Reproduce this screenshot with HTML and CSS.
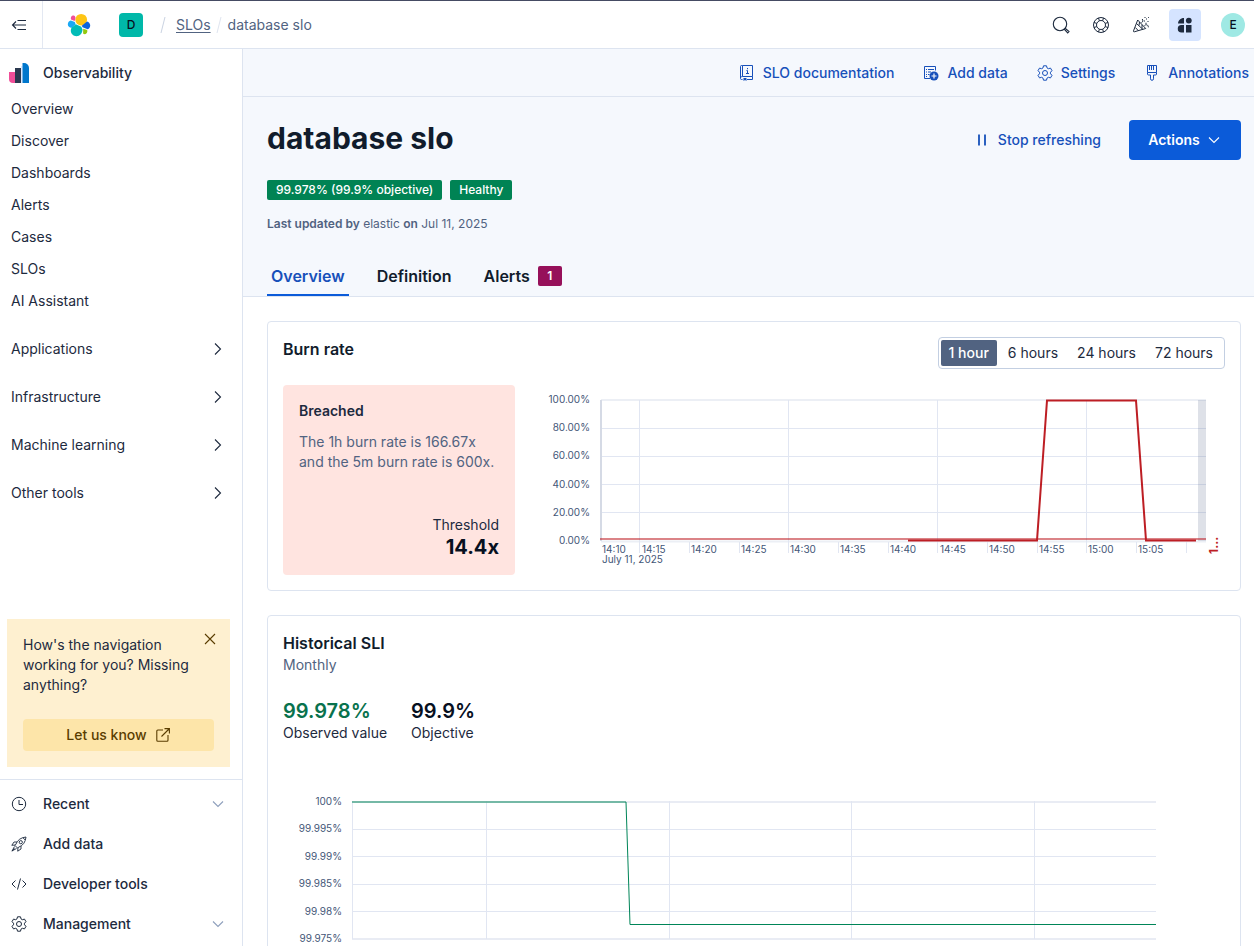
FILE: index.html
```html
<!DOCTYPE html>
<html lang="en">
<head>
<meta charset="utf-8">
<meta name="viewport" content="width=device-width, initial-scale=1">
<title>database slo - SLOs - Elastic</title>
<link rel="stylesheet" href="styles.css">
</head>
<body>
<svg class="defs" width="0" height="0" aria-hidden="true">
  <symbol id="chevron-right" viewBox="0 0 16 16"><path d="M5 2.500l5.500 5.500L5 13.500" fill="none" stroke="currentColor" stroke-width="1.100"/></symbol>
  <symbol id="chevron-down" viewBox="0 0 16 16"><path d="M3 5.500l5 5 5-5" fill="none" stroke="currentColor" stroke-width="1.100"/></symbol>
  <symbol id="gear" viewBox="0 0 16 16"><g fill="none" stroke="currentColor" stroke-linejoin="round"><path d="M6.500.8h3l.5 2.100 1.400.8 2.100-.6 1.500 2.600-1.500 1.500v1.600l1.500 1.500-1.500 2.600-2.100-.6-1.400.8-.5 2.100h-3L6 13.100l-1.400-.8-2.100.6L1 10.300l1.500-1.500V7.200L1 5.700l1.500-2.600 2.100.6L6 2.900z"/><circle cx="8" cy="8" r="2.500"/></g></symbol>
</svg>

<header class="topbar">
  <button class="topbar-toggle" aria-label="Toggle navigation">
    <svg width="16" height="16" viewBox="0 0 16 16" fill="none" stroke="currentColor" stroke-width="1.100"><path d="M6.500 3.500H15M1.500 8H15M6.500 12.500H15M5 4.500L1.500 8 5 11.500"/></svg>
  </button>
  <a class="logo" href="#" aria-label="Elastic home">
    <svg width="24" height="24" viewBox="0 0 24 24">
      <ellipse cx="14.200" cy="6.700" rx="5.900" ry="5.800" fill="#fec514"/>
      <path d="M7.300 2.800c1 .6 1.500 2 .9 3.200l-.5 1.900-3.700-1.300c-.6-1.600.2-3.800 1.800-4.100.6 0 1.100.1 1.500.3z" fill="#f04e98"/>
      <path d="M3.800 7.500l4 1.500.8 2.200-3.700 3.500c-2 .3-4.100-1.300-4.100-3.500 0-1.800 1.300-3.300 3-3.700z" fill="#1ba9f5"/>
      <path d="M4.700 14.600L8.800 11.300l5.500 2.500 1.200 2.800c0 3.700-2.500 6.700-6 6.700-3.200 0-5.700-2.600-5.700-5.700 0-1.100.3-2.100.9-3z" fill="#02bcb7"/>
      <path d="M20 8.400c1.900.5 3.200 2.100 3.200 4 0 1.700-1 3.200-2.600 3.900l-5-2-.8-1.500z" fill="#0b64dd"/>
      <path d="M16.200 15.700l4 1.400c.6 1.900-.6 4.100-2.300 4.100-.7 0-1.300-.2-1.800-.6z" fill="#93c90e"/>
    </svg>
  </a>
  <button class="space" aria-label="Default space">D</button>
  <nav class="crumbs" aria-label="Breadcrumbs">
    <svg class="slash" width="8" height="18" viewBox="0 0 8 18"><path d="M6 1L2 17" stroke="#cad3e2"/></svg>
    <a href="#">SLOs</a>
    <svg class="slash" width="8" height="18" viewBox="0 0 8 18"><path d="M6 1L2 17" stroke="#dfe5f0"/></svg>
    <span>database slo</span>
  </nav>
  <div class="tools">
    <button class="tool" aria-label="Search"><svg width="18" height="18" viewBox="0 0 18 18" fill="none" stroke="currentColor" stroke-width="1.100"><circle cx="8" cy="8" r="6.700"/><path d="M12.500 13.500l1-1 3.500 3-1.300 1.400z"/></svg></button>
    <button class="tool" aria-label="Help"><svg width="18" height="18" viewBox="0 0 18 18" fill="none" stroke="currentColor"><circle cx="9" cy="9" r="7.500"/><circle cx="9" cy="9" r="4.500"/><path d="M6.500 2l.9 2.800M11.500 2l-.9 2.800M6.500 16l.9-2.800M11.500 16l-.9-2.800M2 6.500l2.800.9M2 11.500l2.800-.9M16 6.500l-2.800.9M16 11.500l-2.800-.9"/></svg></button>
    <button class="tool" aria-label="What's new"><svg width="18" height="18" viewBox="0 0 18 18" fill="none" stroke="currentColor"><path d="M5.700 4l8 8.500L2.300 15.800c-.6.2-1-.3-.8-.9zM4.500 7.500l6.500 6M3.300 11.500l3.200 3.300M7.500 6l-.5 3.500M10 8.800v3.700M9.500 6.500c1.500-.5 1.800-2 .7-3.500M12.500 9.500c1.200-1.200 3.700-1.200 3.900 1.800"/><path d="M12 5h1M14 3h1M12.500 1.500h1M15.500 5.500h1M13.500 7.300h1M16 1.500h.8" stroke-width="1.200"/></svg></button>
    <button class="tool tool-active" aria-label="Assistant"><svg width="16" height="16" viewBox="0 0 16 16" fill="currentColor"><path d="M7 1v5.500H1C1 3.500 3.500 1 7 1z"/><circle cx="11.800" cy="3.600" r="2.900"/><path d="M7 8v7.500H4.500a3.700 3.700 0 0 1 0-7.500zM9 8h5.500v7.500H9z"/></svg></button>
    <button class="tool" aria-label="Account menu"><span class="avatar">E</span></button>
  </div>
</header>

<div class="app">
  <aside class="side">
    <nav class="side-main" aria-label="Observability">
      <a class="side-title" href="#">
        <svg width="20" height="20" viewBox="0 0 20 20"><path d="M0 9h6v11H4a4 4 0 0 1-4-4z" fill="#f04e98"/><path d="M6 5h6v15H6z" fill="#2b394f"/><path d="M12 3h1.500v17H12z" fill="#d9e8ff"/><path d="M13.500 0H15a5 5 0 0 1 5 5v15h-6.500z" fill="#0077cc"/></svg>
        <span>Observability</span>
      </a>
      <a class="side-link" href="#">Overview</a>
      <a class="side-link" href="#">Discover</a>
      <a class="side-link" href="#">Dashboards</a>
      <a class="side-link" href="#">Alerts</a>
      <a class="side-link" href="#">Cases</a>
      <a class="side-link" href="#">SLOs</a>
      <a class="side-link" href="#">AI Assistant</a>
      <button class="side-link side-group">Applications<svg width="16" height="16"><use href="#chevron-right"/></svg></button>
      <button class="side-link side-group">Infrastructure<svg width="16" height="16"><use href="#chevron-right"/></svg></button>
      <button class="side-link side-group">Machine learning<svg width="16" height="16"><use href="#chevron-right"/></svg></button>
      <button class="side-link side-group">Other tools<svg width="16" height="16"><use href="#chevron-right"/></svg></button>
    </nav>
    <section class="callout">
      <p>How's the navigation working for you? Missing anything?</p>
      <button class="callout-close" aria-label="Dismiss"><svg width="12" height="12" viewBox="0 0 12 12" stroke="currentColor" stroke-width="1.100"><path d="M1 1l10 10M11 1L1 11"/></svg></button>
      <a class="callout-action" href="#">Let us know
        <svg width="16" height="16" viewBox="0 0 16 16" fill="none" stroke="currentColor" stroke-width="1.100"><path d="M8 3H2.800a1 1 0 0 0-1 1v9.200a1 1 0 0 0 1 1H12a1 1 0 0 0 1-1V8M6.500 9.500l7.500-7.500M9.500 1.600h4.900v4.900"/></svg>
      </a>
    </section>
    <nav class="side-foot" aria-label="Tools">
      <button class="foot-link"><svg width="16" height="16" viewBox="0 0 16 16" fill="none" stroke="currentColor"><circle cx="8" cy="8" r="6.700"/><path d="M8 4v4.500h4"/></svg><span>Recent</span><svg class="foot-arrow" width="16" height="16"><use href="#chevron-down"/></svg></button>
      <a class="foot-link" href="#"><svg width="16" height="16" viewBox="0 0 16 16" fill="none" stroke="currentColor" stroke-width=".9"><path d="M5 8c1.500-4 5-6.500 10-7-.5 5-3 8.500-7 10L6.500 12 4 9.500zM6 6H3L.8 9.300 4.200 9M10 10v3l-3.300 2.200.3-3.400M3.500 10.500L1 15l4.500-2.500M3.500 12.500L.8 15.200M12 1.800L14.200 4"/><circle cx="9.800" cy="6.200" r="1.600"/></svg><span>Add data</span></a>
      <a class="foot-link" href="#"><svg width="16" height="16" viewBox="0 0 16 16" fill="none" stroke="currentColor"><path d="M4.500 4.500L1 8l3.500 3.500M11.500 4.500L15 8l-3.500 3.500M9.500 2.500l-3 11"/></svg><span>Developer tools</span></a>
      <button class="foot-link"><svg width="16" height="16"><use href="#gear"/></svg><span>Management</span><svg class="foot-arrow" width="16" height="16"><use href="#chevron-down"/></svg></button>
    </nav>
  </aside>

  <main class="main">
    <div class="actions-bar">
      <a class="bar-link" href="#"><svg width="16" height="16" viewBox="0 0 16 16" fill="none" stroke="currentColor"><path d="M3.500.5h10v11h-10zM3.500.5h-1a1 1 0 0 0-1 1v12a1 1 0 0 0 1 1h1M3.500 11.500c-1 0-2 .5-2 1.500M8 14.500h5.500v-3"/><path d="M4.500 13h3v3L6 15l-1.500 1z" fill="currentColor" stroke="none"/><path d="M8.500 3v1.200M7.500 5.500h1v3M7 8.500h3"/></svg>SLO documentation</a>
      <a class="bar-link" href="#"><svg width="16" height="16" viewBox="0 0 16 16" fill="none" stroke="currentColor"><path d="M12.500 5.500v-4h-11v12H7M3 4.500h1M5 4.500h6M3 7h1M5 7h3M3 9.500h1M5 9.500h1.500M3 11.500h1"/><circle cx="11" cy="11" r="4.500" fill="currentColor" stroke="none"/><path d="M11 8.500v5M8.500 11h5" stroke="#f5f8fd" stroke-width="1.200"/></svg>Add data</a>
      <a class="bar-link" href="#"><svg width="16" height="16"><use href="#gear"/></svg>Settings</a>
      <a class="bar-link" href="#"><svg width="16" height="16" viewBox="0 0 16 16" fill="none" stroke="currentColor"><path d="M3.500.5h9v7h-9zM3.500 7.500V9a1 1 0 0 0 1 1h2v3.800a1.500 1.500 0 0 0 3 0V10h2a1 1 0 0 0 1-1V7.500M5.500.5v4.500M7.500.5v4.500M9.500.5v4.500"/></svg>Annotations</a>
    </div>

    <section class="page-head">
      <div class="head-row">
        <h1>database slo</h1>
        <div class="head-actions">
          <button class="refresh"><svg width="16" height="16" viewBox="0 0 16 16" stroke="currentColor" stroke-width="1.800"><path d="M5 2.500v11M11 2.500v11"/></svg>Stop refreshing</button>
          <button class="primary">Actions<svg width="16" height="16"><use href="#chevron-down"/></svg></button>
        </div>
      </div>
      <div class="badges"><span class="badge">99.978% (99.9% objective)</span><span class="badge">Healthy</span></div>
      <p class="updated"><b>Last updated by</b> elastic <b>on</b> Jul 11, 2025</p>
      <div class="tabs" role="tablist">
        <button class="tab tab-on" role="tab" aria-selected="true">Overview</button>
        <button class="tab" role="tab" aria-selected="false">Definition</button>
        <button class="tab" role="tab" aria-selected="false">Alerts<span class="count">1</span></button>
      </div>
    </section>

    <div class="panels">
      <section class="panel">
        <div class="panel-head">
          <h2>Burn rate</h2>
          <div class="ranges" role="group" aria-label="Time window">
            <button class="range range-on" aria-pressed="true">1 hour</button>
            <button class="range" aria-pressed="false">6 hours</button>
            <button class="range" aria-pressed="false">24 hours</button>
            <button class="range" aria-pressed="false">72 hours</button>
          </div>
        </div>
        <div class="burn">
          <div class="breach">
            <h3>Breached</h3>
            <p>The 1h burn rate is 166.67x and the 5m burn rate is 600x.</p>
            <div class="threshold"><span>Threshold</span><strong>14.4x</strong></div>
          </div>
          <svg class="chart" viewBox="0 0 686 190" role="img" aria-label="Burn rate over the last hour">
            <g fill="none" stroke="#e1e6f2">
              <path d="M62 15H667M62 156.500H667" stroke="#eceff5" stroke-width="2"/>
              <path d="M62 43.500H667M62 71.500H667M62 99.500H667M62 127.500H667M100.500 15V168M249.500 15V168M398.500 15V168M547.500 15V168"/>
              <path d="M150.500 157V168M200.500 157V168M299.500 157V168M349.500 157V168M448.500 157V168M498.500 157V168M597.500 157V168M647.500 157V168"/>
            </g>
            <path d="M62 15V156" stroke="#d5dae5" stroke-width="2"/>
            <path d="M659 15h8v141h-8z" fill="#5a688c" fill-opacity=".2"/>
            <path d="M61 154H667" stroke="#bd1e24" stroke-opacity=".55" stroke-width="2"/>
            <path d="M369 155.500H498L508 15.500H597L607 155.500H657" fill="none" stroke="#bd1e24" stroke-width="2"/>
            <g class="ticks ticks-y"><text x="51" y="18">100.00%</text><text x="51" y="46">80.00%</text><text x="51" y="74">60.00%</text><text x="51" y="103">40.00%</text><text x="51" y="131">20.00%</text><text x="51" y="159">0.00%</text></g>
            <g class="ticks"><text x="63" y="168">14:10</text><text x="103" y="168">14:15</text><text x="152" y="168">14:20</text><text x="202" y="168">14:25</text><text x="251" y="168">14:30</text><text x="301" y="168">14:35</text><text x="351" y="168">14:40</text><text x="401" y="168">14:45</text><text x="450" y="168">14:50</text><text x="500" y="168">14:55</text><text x="549" y="168">15:00</text><text x="599" y="168">15:05</text><text x="63" y="178">July 11, 2025</text></g>
            <text class="mark" transform="translate(679 169) rotate(-90)">1…</text>
          </svg>
        </div>
      </section>

      <section class="panel">
        <h2>Historical SLI</h2>
        <p class="period">Monthly</p>
        <dl class="stats">
          <div class="stat"><dt>Observed value</dt><dd class="good">99.978%</dd></div>
          <div class="stat"><dt>Objective</dt><dd>99.9%</dd></div>
        </dl>
        <svg class="chart" viewBox="0 0 942 170" role="img" aria-label="Historical SLI, monthly">
          <g fill="none" stroke="#e1e6f2">
            <path d="M69 19H873M69 156H873" stroke="#e9ecf4" stroke-width="2"/>
            <path d="M69 46.500H873M69 73.500H873M69 101.500H873M69 128.500H873M69.500 18V156M203.500 18V156M386.500 18V156M568.500 18V156M751.500 18V156"/>
          </g>
          <path d="M69 19H343L347 141.500H873" fill="none" stroke="#008558" stroke-width="1"/>
          <g class="ticks ticks-y"><text x="59" y="22">100%</text><text x="59" y="49">99.995%</text><text x="59" y="77">99.99%</text><text x="59" y="104">99.985%</text><text x="59" y="132">99.98%</text><text x="59" y="159">99.975%</text></g>
        </svg>
      </section>
    </div>
  </main>
</div>
</body>
</html>
```

FILE: styles.css
```css
* { box-sizing: border-box; }
body {
  margin: 0;
  height: 100vh;
  display: flex;
  flex-direction: column;
  overflow: hidden;
  background: #fff;
  color: #1d2a3e;
  font: 400 14px/20px Inter, "Liberation Sans", sans-serif;
}
h1, h2, h3, p, dl, dd { margin: 0; }
button { border: 0; padding: 0; background: none; color: inherit; font: inherit; cursor: pointer; }
a { color: inherit; text-decoration: none; }
svg { flex: none; }
.defs { position: absolute; }

.topbar {
  flex: none;
  display: flex;
  align-items: center;
  height: 49px;
  border-top: 1px solid #454b63;
  border-bottom: 1px solid #dde4f0;
}
.topbar-toggle {
  display: flex;
  align-items: center;
  align-self: stretch;
  width: 43px;
  padding-left: 11px;
  border-right: 1px solid #e3e8f2;
}
.logo { display: flex; margin-left: 24px; }
.space {
  width: 24px;
  height: 24px;
  margin-left: 28px;
  border-radius: 4px;
  background: #00b8a9;
  color: #07101f;
  font-size: 12px;
  font-weight: 500;
}
.crumbs { display: flex; align-items: center; margin-left: 16px; color: #516381; }
.crumbs a { margin: 0 4px 0 9px; text-decoration: underline; text-underline-offset: 2px; }
.crumbs span { margin-left: 5px; }
.tools { display: flex; gap: 8px; margin-left: auto; padding-right: 5px; }
.tool { display: flex; align-items: center; justify-content: center; width: 32px; height: 32px; border-radius: 4px; }
.tool-active { margin: 0 8px 0 4px; background: #d5e4ff; }
.avatar {
  width: 24px;
  border-radius: 50%;
  background: #9fe9e4;
  color: #07101f;
  font-size: 12px;
  font-weight: 500;
  line-height: 24px;
}

.app { flex: 1; display: flex; min-height: 0; }

.side { flex: none; display: flex; flex-direction: column; width: 243px; border-right: 1px solid #dde4f0; }
.side-main { display: flex; flex-direction: column; }
.side-title { display: flex; align-items: center; gap: 14px; height: 44px; padding: 4px 0 0 9px; font-weight: 500; }
.side-link { display: flex; align-items: center; justify-content: space-between; height: 32px; padding: 0 16px 0 11px; }
.side-group { margin-top: 16px; }
.callout { position: relative; margin: auto 12px 12px 7px; padding: 16px; background: #fef0d0; }
.callout p { padding-right: 24px; }
.callout-close { position: absolute; top: 14px; right: 14px; display: flex; color: #5a3d00; }
.callout-action {
  display: flex;
  align-items: center;
  justify-content: center;
  gap: 8px;
  height: 32px;
  margin-top: 24px;
  border-radius: 4px;
  background: #fde5a9;
  color: #5a3d00;
  font-weight: 500;
}
.side-foot { display: flex; flex-direction: column; padding: 4px 0 2px; border-top: 1px solid #dde4f0; }
.foot-link { display: flex; align-items: center; gap: 16px; height: 40px; padding: 0 16px 0 11px; font-weight: 500; }
.foot-arrow { margin-left: auto; color: #8e9fbc; }

.main { flex: 1; min-width: 0; overflow-y: auto; scrollbar-width: none; }
.actions-bar {
  display: flex;
  align-items: center;
  justify-content: flex-end;
  gap: 29px;
  height: 48px;
  padding-right: 5px;
  border-bottom: 1px solid #dde4f0;
  background: #f5f8fd;
  color: #1750ba;
  font-weight: 500;
}
.bar-link { display: flex; align-items: center; gap: 8px; }

.page-head { padding: 23px 13px 0 24px; border-bottom: 1px solid #dde4f0; background: #f5f8fd; }
.head-row { display: flex; align-items: flex-start; justify-content: space-between; }
h1 { color: #111c2c; font-size: 30px; font-weight: 700; line-height: 36px; }
.head-actions { display: flex; gap: 28px; }
.refresh { display: flex; align-items: center; gap: 8px; color: #1750ba; font-weight: 500; }
.primary {
  display: flex;
  align-items: center;
  justify-content: center;
  gap: 6px;
  width: 112px;
  height: 40px;
  border-radius: 4px;
  background: #0b5bd9;
  color: #fff;
  font-weight: 600;
}
.badges { display: flex; gap: 8px; margin-top: 20px; }
.badge { padding: 0 9px; border-radius: 2px; background: #008354; color: #fff; font-size: 12px; font-weight: 500; }
.updated { margin-top: 14px; color: #516381; font-size: 12px; }
.updated b { font-weight: 600; }
.tabs { display: flex; gap: 24px; margin-top: 22px; }
.tab { display: flex; align-items: center; gap: 8px; height: 40px; padding: 2px 4px 0; border-bottom: 2px solid transparent; color: #111c2c; font-size: 16px; font-weight: 600; }
.tab-on { border-color: #0b5bd9; color: #1750ba; }
.count { width: 24px; border-radius: 2px; background: #96105a; color: #fff; font-size: 12px; line-height: 20px; }

.panels { display: flex; flex-direction: column; gap: 24px; padding: 24px 13px 24px 24px; }
.panel { padding: 15px; border: 1px solid #dde4f0; border-radius: 4px; }
.panel-head { display: flex; align-items: flex-start; justify-content: space-between; }
h2 { color: #111c2c; font-size: 16px; font-weight: 600; line-height: 24px; }
.ranges { display: flex; gap: 3px; padding: 2px; border: 1px solid #c3cfe2; border-radius: 4px; }
.range { height: 26px; padding: 0 8px; border-radius: 2px; }
.range:last-child { padding-right: 9px; }
.range-on { background: #516381; color: #fff; font-weight: 500; }
.burn { display: grid; grid-template-columns: 232px 1fr; gap: 24px; margin-top: 16px; }
.breach { display: flex; flex-direction: column; padding: 16px; border-radius: 4px; background: #ffe4e0; }
h3 { font-size: 14px; font-weight: 600; line-height: 20px; }
.breach p { margin-top: 11px; color: #516381; }
.threshold { display: flex; flex-direction: column; margin-top: auto; text-align: right; }
.threshold strong { color: #07101f; font-size: 20px; font-weight: 700; line-height: 24px; }
.chart { display: block; width: 100%; height: auto; overflow: visible; }
.ticks { fill: #435677; font-size: 10px; }
.ticks-y { text-anchor: end; }
.mark { fill: #bd1e24; font-size: 12px; font-weight: 700; }
.period { color: #516381; }
.stats { display: flex; gap: 24px; margin: 24px 0 40px; }
.stat { display: flex; flex-direction: column-reverse; }
.stat dd { color: #07101f; font-size: 20px; font-weight: 600; line-height: 24px; }
.stat .good { color: #09724d; }
```
